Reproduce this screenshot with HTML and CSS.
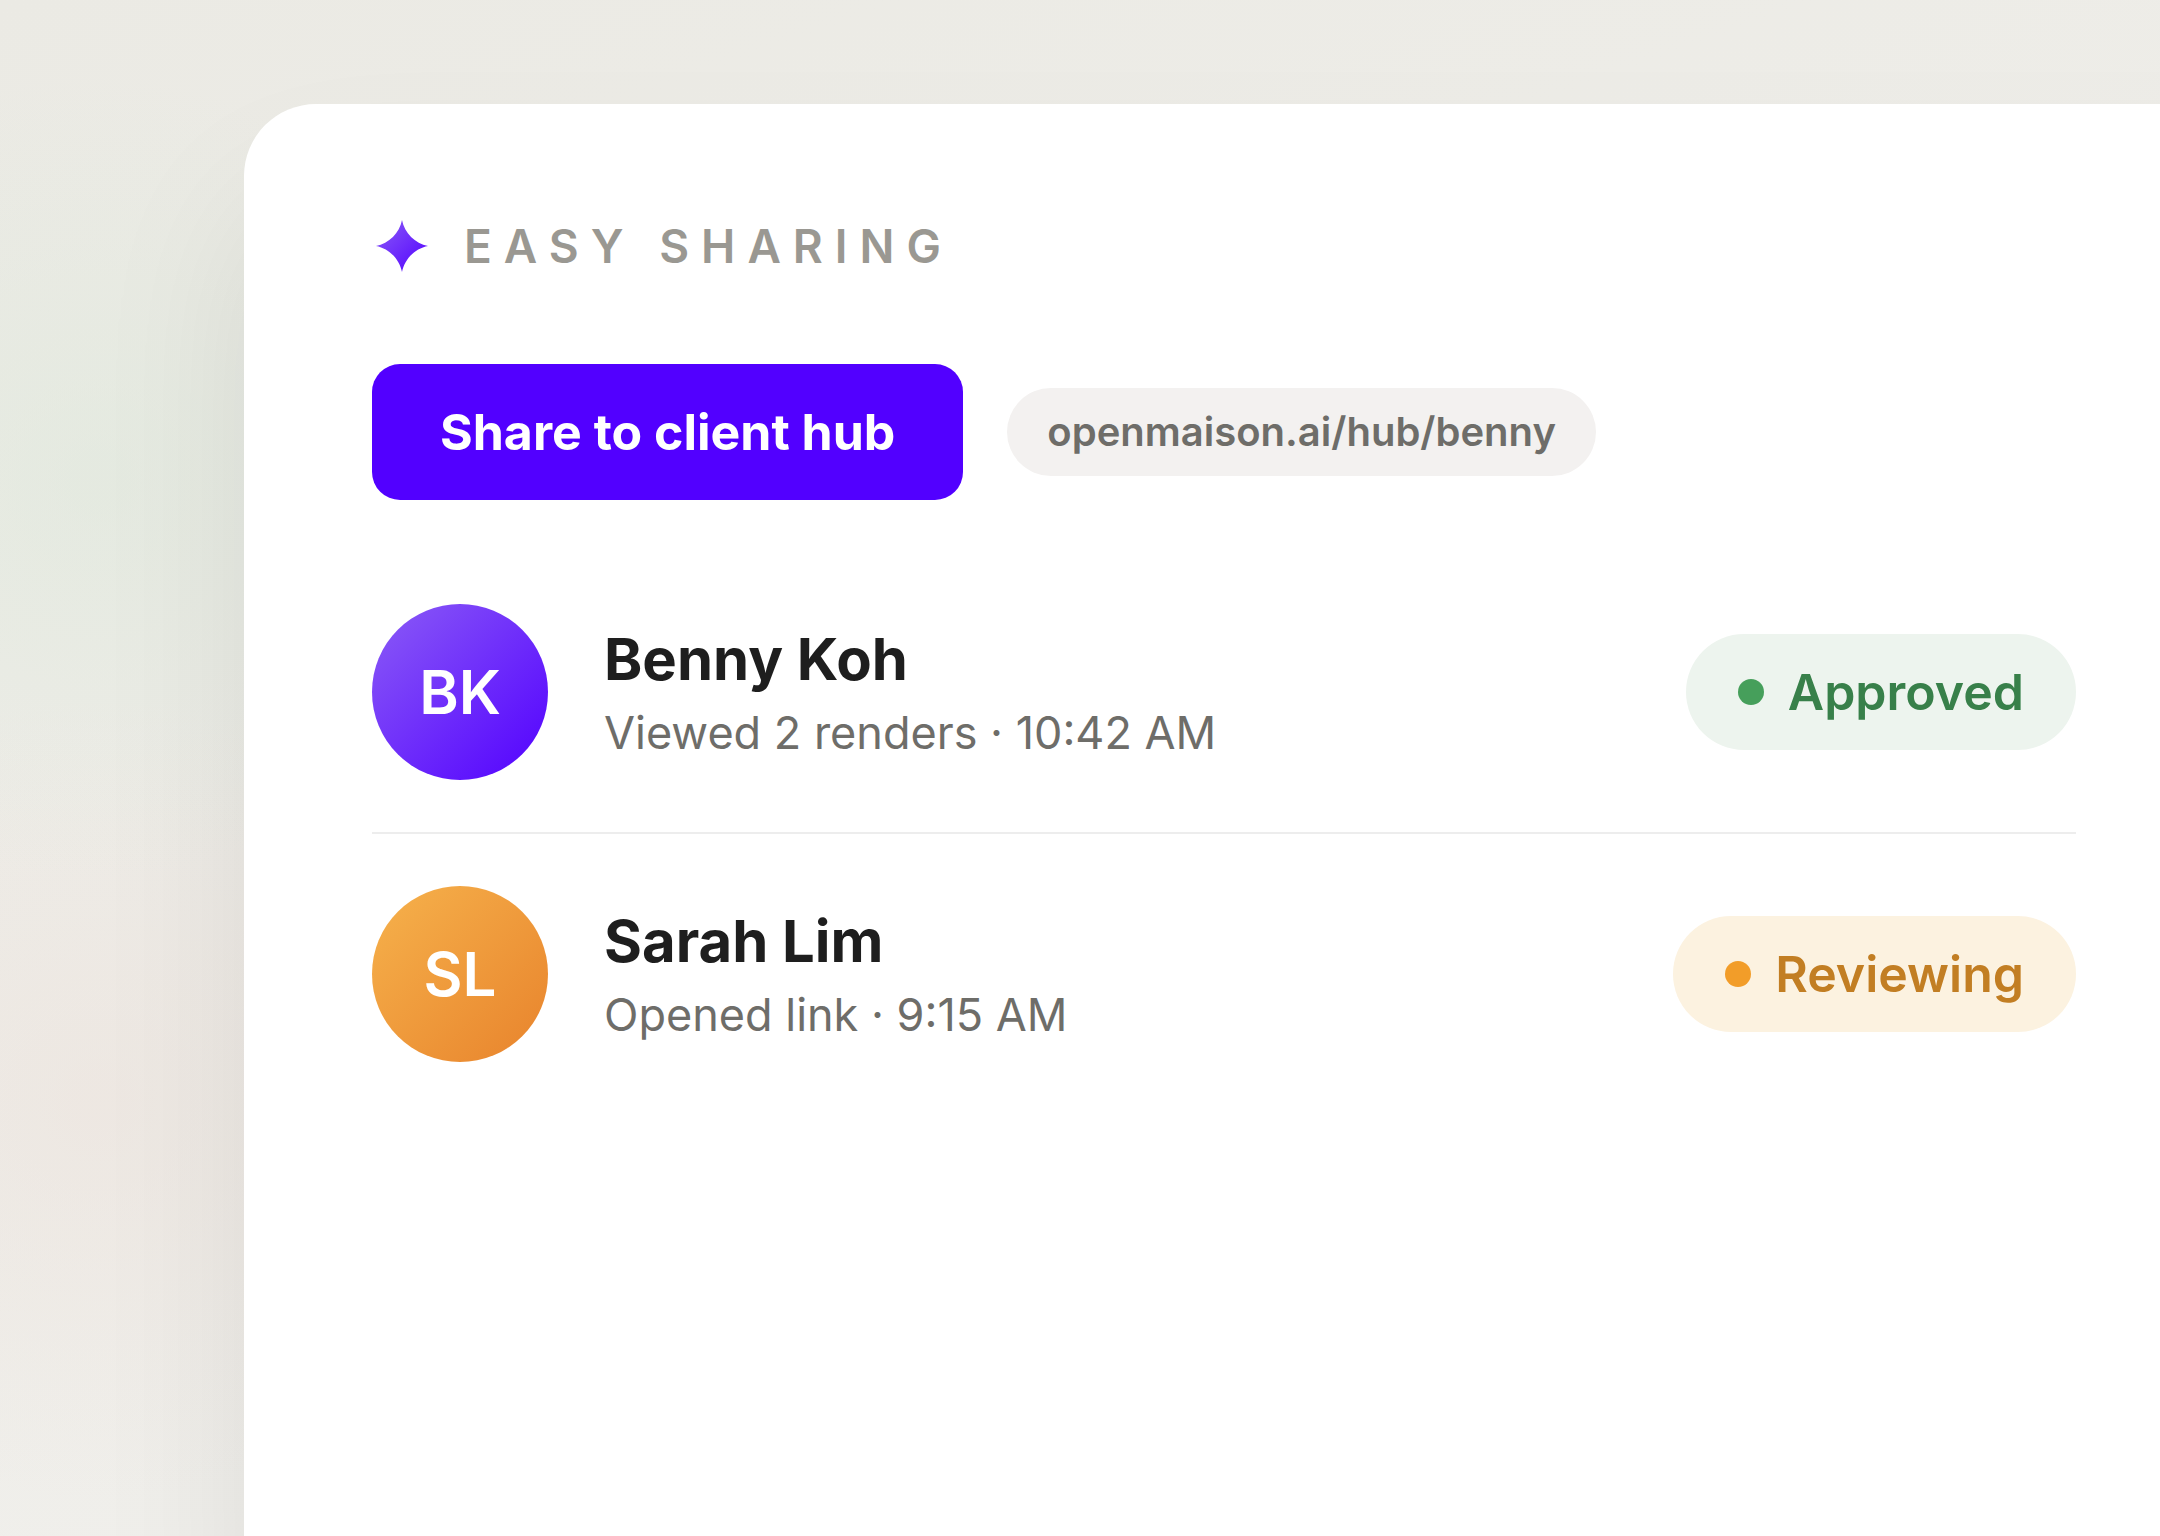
FILE: index.html
```html
<!DOCTYPE html>
<html lang="en">
<head>
<meta charset="utf-8">
<title>Easy sharing</title>
<link rel="stylesheet" href="styles.css">
</head>
<body>
<main class="stage">
  <section class="card">
    <header class="eyebrow">
      <svg class="spark" viewBox="0 0 60 60" aria-hidden="true">
        <defs>
          <linearGradient id="spark-fill" x1="0" y1="0" x2="1" y2="1">
            <stop offset="0" stop-color="#8b5cf6"/>
            <stop offset="1" stop-color="#5200ff"/>
          </linearGradient>
        </defs>
        <path fill="url(#spark-fill)" d="M30 4C32.500 17 43 27.500 56 30C43 32.500 32.500 43 30 56C27.500 43 17 32.500 4 30C17 27.500 27.500 17 30 4Z"/>
      </svg>
      <h1 class="eyebrow-text">EASY SHARING</h1>
    </header>
    <div class="actions">
      <button class="share" type="button">Share to client hub</button>
      <a class="link" href="#hub">openmaison.ai/hub/benny</a>
    </div>
    <ul class="people">
      <li class="person">
        <span class="avatar avatar-violet">BK</span>
        <div class="who">
          <h2 class="name">Benny Koh</h2>
          <p class="activity">Viewed 2 renders · 10:42 AM</p>
        </div>
        <span class="status approved">Approved</span>
      </li>
      <li class="person">
        <span class="avatar avatar-amber">SL</span>
        <div class="who">
          <h2 class="name">Sarah Lim</h2>
          <p class="activity">Opened link · 9:15 AM</p>
        </div>
        <span class="status reviewing">Reviewing</span>
      </li>
    </ul>
  </section>
</main>
</body>
</html>
```
FILE: styles.css
```css
* {
  box-sizing: border-box;
  margin: 0;
  padding: 0;
}

body {
  font-family: Inter, sans-serif;
  color: #1e1e1e;
}

.stage {
  display: flex;
  min-height: 100vh;
  padding: 104px 0 0 244px;
  overflow: hidden;
  background:
    radial-gradient(circle at 97px 478px, rgba(220, 232, 218, 0.5), rgba(220, 232, 218, 0) 400px),
    radial-gradient(circle at 97px 1100px, rgba(236, 222, 215, 0.4), rgba(236, 222, 215, 0) 400px),
    linear-gradient(160deg, #ebeae4, #f2f1ee);
}

.card {
  flex: 1;
  margin: 0 -200px -80px 0;
  padding: 112px 284px 112px 128px;
  border-radius: 72px;
  background: #fff;
  box-shadow: 0 96px 160px rgba(20, 20, 20, 0.08);
}

.eyebrow {
  display: flex;
  align-items: center;
  gap: 32px;
  height: 60px;
}

.spark {
  width: 60px;
  height: 60px;
}

.eyebrow-text {
  font-size: 46px;
  font-weight: 600;
  line-height: 60px;
  letter-spacing: 12px;
  color: #9a9892;
}

.actions {
  display: flex;
  align-items: center;
  gap: 44px;
  margin: 88px 0 52px;
}

.share {
  padding: 0 68px;
  border: 0;
  border-radius: 28px;
  background: #5200ff;
  color: #fff;
  font: 700 50px/136px Inter, sans-serif;
}

.link {
  padding: 0 40px;
  border-radius: 44px;
  background: #f3f1f0;
  color: #6e6d69;
  font-size: 40px;
  font-weight: 600;
  line-height: 88px;
  text-decoration: none;
}

.people {
  list-style: none;
}

.person {
  display: flex;
  align-items: center;
  gap: 56px;
  padding: 52px 0;
}

.person + .person {
  border-top: 2px solid #ededed;
}

.avatar {
  width: 176px;
  border-radius: 50%;
  color: #fff;
  font-size: 60px;
  font-weight: 600;
  line-height: 176px;
  text-align: center;
}

.avatar-violet {
  background: linear-gradient(135deg, #8b5cf6, #5200ff);
}

.avatar-amber {
  background: linear-gradient(135deg, #f6b24c, #e8832c);
}

.who {
  flex: 1;
}

.name {
  font-size: 58px;
  font-weight: 700;
  line-height: 82px;
}

.activity {
  font-size: 45px;
  line-height: 66px;
  color: #6e6d69;
}

.status {
  display: flex;
  align-items: center;
  gap: 24px;
  padding: 0 52px;
  border-radius: 58px;
  font-size: 50px;
  font-weight: 600;
  line-height: 116px;
}

.status::before {
  content: "";
  width: 26px;
  height: 26px;
  border-radius: 50%;
}

.approved {
  background: #edf4ee;
  color: #38804a;
}

.approved::before {
  background: #469f5b;
}

.reviewing {
  background: #fcf2e0;
  color: #c27e23;
}

.reviewing::before {
  background: #f29d29;
}
```
